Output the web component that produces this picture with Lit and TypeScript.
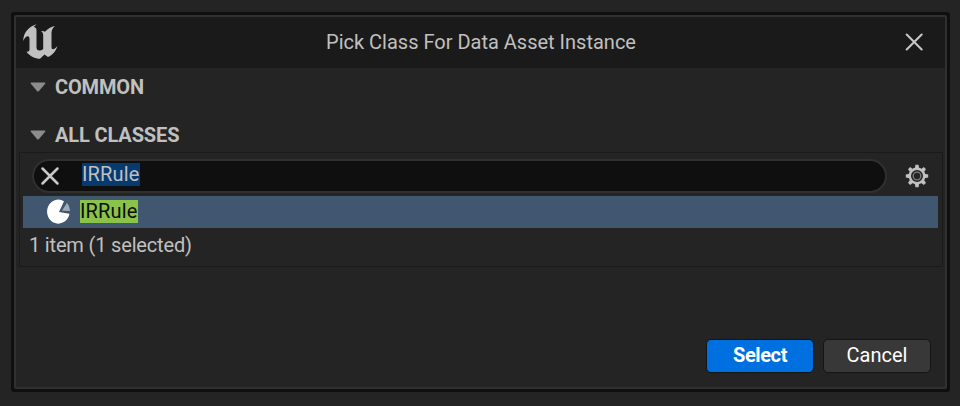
import { LitElement, html, css, svg } from "lit";
import { customElement, property } from "lit/decorators.js";

@customElement("section-header")
class SectionHeader extends LitElement {
  @property() label = "";
  static styles = css`
    :host { display: flex; align-items: center; height: 48px; padding-left: 14px; box-sizing: border-box; }
    svg { display: block; margin-right: 9px; }
    span { font-size: 20px; font-weight: 700; line-height: 24px; letter-spacing: -0.13px; color: #c0c0c0; white-space: nowrap; }
  `;
  render() {
    return html`<svg width="16" height="10" viewBox="0 0 16 10">
        <path d="M1.4.6h13.2q1.4 0 .5 1.2L9 9.1q-1 1-2 0L.9 1.8Q0 .6 1.4.6z" fill="#8c8c8c" />
      </svg><span>${this.label}</span>`;
  }
}

const teeth = [0, 45, 90, 135, 180, 225, 270, 315];

@customElement("app-root")
class AppRoot extends LitElement {
  static styles = css`
    :host {
      display: block; box-sizing: border-box; width: 960px; height: 406px;
      padding: 12px 10px 14px 11px; background: #242424; overflow: hidden;
      font-family: Roboto, "Liberation Sans", sans-serif; font-size: 20px; line-height: 24px; color: #c0c0c0;
    }
    * { box-sizing: border-box; }
    svg { display: block; flex: none; }
    .frame { height: 380px; border: 3px solid #0f0f0f; border-radius: 3px; background: #0f0f0f; }
    .window { height: 374px; border: 2px solid #303030; border-radius: 2px; background: #242424; display: flex; flex-direction: column; }
    .title { height: 51px; flex: none; background: #1a1a1a; display: grid; grid-template-columns: 60px 1fr 60px; align-items: center; padding-bottom: 1px; }
    .title h1 { margin: 0; font: inherit; text-align: center; padding-left: 1px; }
    .logo { margin-left: 7px; }
    .close { margin-left: 20px; }
    .common { height: 38px; }
    .all { margin-top: 10px; height: 36px; padding-top: 1px; }
    .panel { margin: 0 2px 0 3px; height: 115px; border: 1px solid #1a1a1a; padding: 6px 4px 0 3px; }
    .tools { display: flex; align-items: center; height: 34px; padding-left: 9px; }
    .search { width: 855px; height: 34px; border: 2px solid #303030; border-radius: 17px; background: #0f0f0f; display: flex; align-items: center; padding-left: 6px; }
    .term { margin-left: 22px; margin-top: -3px; background: #073b70; height: 23px; line-height: 23px; letter-spacing: 0.17px; }
    .gear { margin-left: 18px; }
    .row { margin-top: 3px; height: 32px; background: #40576f; display: flex; align-items: center; padding-left: 24px; }
    .hit { margin-left: 9px; margin-top: -2px; background: #8bc24a; color: #0a0f06; height: 23px; line-height: 23px; letter-spacing: 0.17px; }
    .count { padding-left: 6px; margin-top: 5px; letter-spacing: -0.17px; }
    .actions { margin-top: auto; display: flex; justify-content: flex-end; gap: 9px; padding: 0 14px 14px 0; }
    .btn { width: 108px; height: 34px; border: 1px solid #141414; border-radius: 5px; background: #383838; color: #fff; font: inherit; line-height: 24px; padding: 0 0 2px; }
    .primary { background: #0070e0; font-weight: 700; letter-spacing: -0.4px; }
  `;

  render() {
    return html`
      <div class="frame"><div class="window">
        <header class="title">
          <svg class="logo" width="36" height="36" viewBox="0 0 36 36">
            <path fill="#c0c0c0" d="M13.700.3C6 2.500.3 8.500.2 17C1.500 14 3.200 12.300 4.800 12.200Q6.500 12.200 6.500 14.500V26Q6.500 28 3.500 27.800C7 32.500 12 34.800 17 34.800L21.500 30.500L25 33C29.500 31 33 27 34.500 22Q31.500 25.300 30 25.300Q28.500 25.300 28.500 23V9Q28.500 5 32 2Q26 3 22 7.800Q20.500 6.800 18.200 7.200Q20.200 8.500 20.200 11V25Q18.500 26.500 16.500 26.500Q13.500 26.500 13.500 23V6.500Q13.500 3.300 10.500 3Z" />
          </svg>
          <h1>Pick Class For Data Asset Instance</h1>
          <svg class="close" width="18" height="18" viewBox="0 0 18 18"><path d="M1.700 1.500l15 15M16.700 1.500l-15 15" stroke="#c8c8c8" stroke-width="2" stroke-linecap="round" /></svg>
        </header>
        <section-header class="common" label="COMMON"></section-header>
        <section-header class="all" label="ALL CLASSES"></section-header>
        <section class="panel">
          <div class="tools">
            <div class="search">
              <svg width="20" height="20" viewBox="0 0 20 20"><path d="M2.500 2.500l15 15M17.500 2.500l-15 15" stroke="#c8c8c8" stroke-width="2.500" stroke-linecap="round" /></svg>
              <span class="term">IRRule</span>
            </div>
            <svg class="gear" width="24" height="24" viewBox="-12 -12 24 24">
              <circle r="7.200" fill="none" stroke="#c0c0c0" stroke-width="2.400" />
              ${teeth.map((a) => svg`<path transform="rotate(${a})" d="M-2.200-7.500l.7-3.700h3l.7 3.700z" fill="#c0c0c0" />`)}
              <circle r="3.800" fill="none" stroke="#7c7c7c" stroke-width="1.300" />
            </svg>
          </div>
          <div class="row">
            <svg width="24" height="26" viewBox="0 0 24 26">
              <path d="M12 13L17 2.200A11.300 12 0 1 0 22.500 14.800z" fill="#fff" />
              <path d="M15 11.800L20 3.800Q22.800 7 23.200 12z" fill="#a0acb8" />
            </svg>
            <span class="hit">IRRule</span>
          </div>
          <div class="count">1 item (1 selected)</div>
        </section>
        <footer class="actions">
          <button class="btn primary">Select</button>
          <button class="btn">Cancel</button>
        </footer>
      </div></div>`;
  }
}
